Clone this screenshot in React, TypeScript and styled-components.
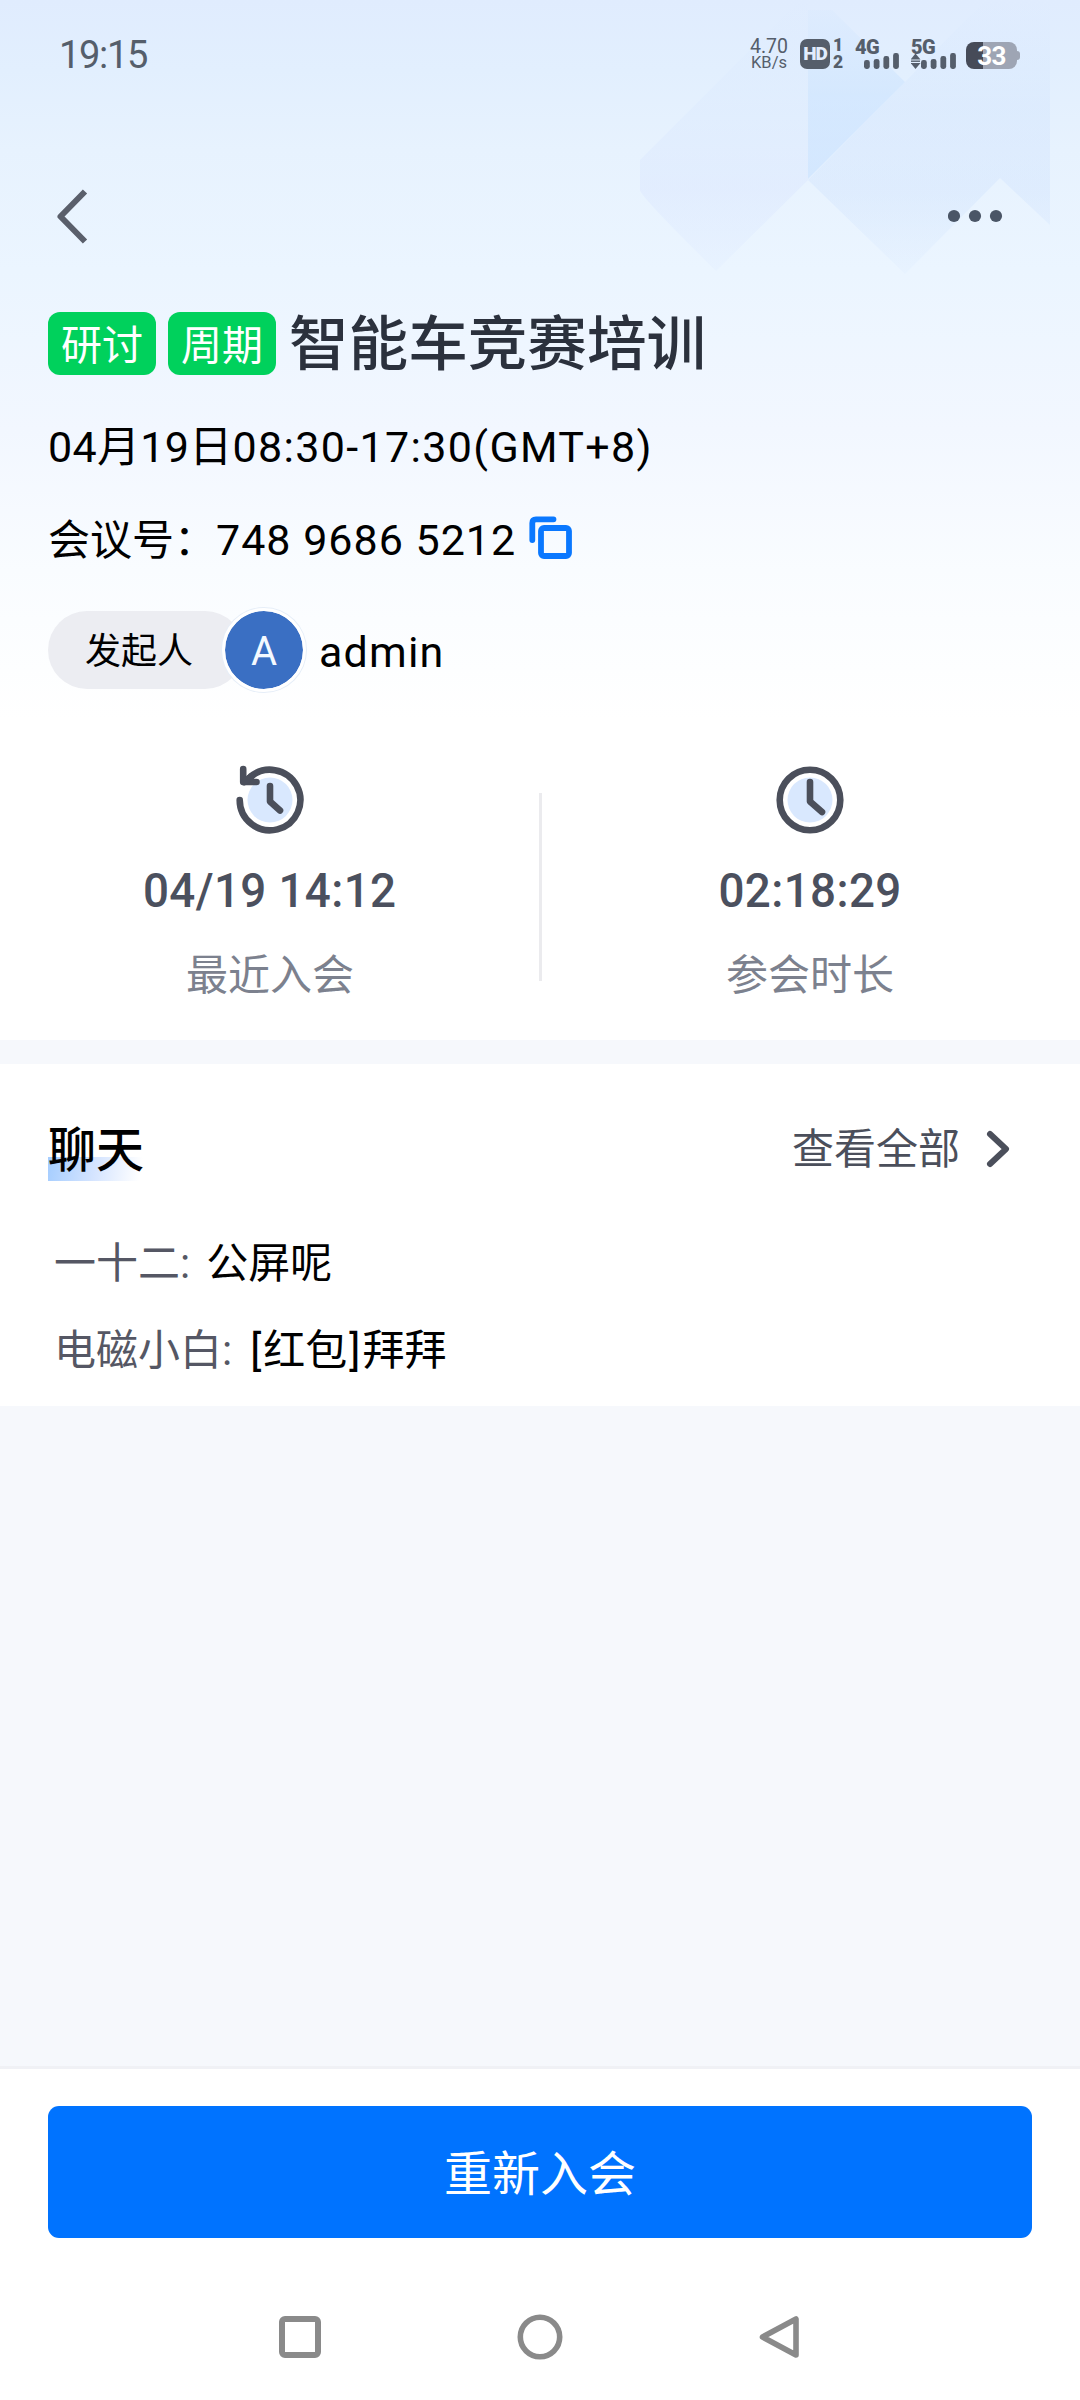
import React from "react";
import styled, { createGlobalStyle } from "styled-components";

const GlobalStyle = createGlobalStyle`
  * { box-sizing: border-box; }
  body {
    margin: 0;
    background: #ffffff;
    font-family: Roboto, "Noto Sans CJK SC", sans-serif;
  }
`;

const Screen = styled.main`
  width: 1080px;
  height: 2400px;
  display: flex;
  flex-direction: column;
  background: #f6f8fc;
  overflow: hidden;
`;

const Hero = styled.section`
  position: relative;
  height: 1040px;
  display: flex;
  flex-direction: column;
  background: linear-gradient(
    180deg,
    #e0ecfe 0px,
    #e2effe 70px,
    #e7f2fe 150px,
    #ebf5ff 270px,
    #f2f7ff 430px,
    #f9fcff 570px,
    #ffffff 720px
  );
`;

const Backdrop = styled.svg`
  position: absolute;
  top: 0;
  right: 0;
`;

const StatusBar = styled.header`
  position: relative;
  height: 108px;
  padding: 0 60px 0 59px;
  display: flex;
  align-items: center;
  justify-content: space-between;
  color: #555e6b;
`;

const Clock = styled.span`
  margin-top: 2px;
  font-size: 38px;
  line-height: 44px;
  letter-spacing: -1.3px;
`;

const StatusIcons = styled.div`
  display: flex;
  align-items: flex-start;
  height: 30px;
`;

const NetSpeed = styled.div`
  width: 42px;
  margin-right: 10px;
  display: flex;
  flex-direction: column;
  align-items: center;
  white-space: nowrap;
`;

const SpeedValue = styled.span`
  font-size: 19.5px;
  line-height: 15px;
`;

const SpeedUnit = styled.span`
  font-size: 16.5px;
  line-height: 18px;
`;

const HdBadge = styled.span`
  width: 30px;
  height: 30px;
  border-radius: 7px;
  background: #555e6b;
  color: #e2edfd;
  display: flex;
  align-items: center;
  justify-content: center;
  font-size: 19px;
  line-height: 30px;
  font-weight: 900;
  letter-spacing: -1px;
`;

const SimNumbers = styled.div`
  width: 12px;
  margin: -2px 11px 0 2px;
  display: flex;
  flex-direction: column;
  align-items: center;
  font-size: 17.5px;
  line-height: 17px;
  font-weight: 900;
`;

const Signal = styled.div<{ $gap: number }>`
  width: 45px;
  height: 30px;
  margin-right: ${(p) => p.$gap}px;
  display: flex;
  flex-direction: column;
`;

const SignalLabel = styled.span`
  height: 14px;
  font-size: 20px;
  line-height: 16px;
  font-weight: 900;
  letter-spacing: -0.7px;
`;

const SignalGlyph = styled.svg`
  display: block;
  flex: none;
`;

const Battery = styled.div`
  width: 51px;
  height: 27px;
  margin-top: 3px;
  border-radius: 8px;
  background: linear-gradient(90deg, #464b58 0 17px, #9ea5b4 17px);
  color: #ffffff;
  display: flex;
  justify-content: center;
  font-size: 26px;
  line-height: 28px;
  font-weight: 700;
  letter-spacing: -0.6px;
`;

const BatteryTip = styled.i`
  width: 3px;
  height: 9px;
  margin-top: 12px;
  border-radius: 0 3px 3px 0;
  background: #9ea5b4;
`;

const NavRow = styled.nav`
  position: relative;
  height: 108px;
  margin-top: 54px;
  padding: 0 76px 0 54px;
  display: flex;
  align-items: center;
  justify-content: space-between;
`;

const TitleRow = styled.div`
  height: 63px;
  margin: 42px 48px 0;
  display: flex;
  align-items: center;
`;

const Tag = styled.span`
  width: 108px;
  height: 63px;
  margin-right: 12px;
  border-radius: 12px;
  background: #00d15c;
  color: #ffffff;
  font-size: 41px;
  line-height: 68px;
  text-align: center;
`;

const Title = styled.h1`
  margin: 3px 0 0 1px;
  color: #2b313d;
  font-size: 59.6px;
  line-height: 60px;
  font-weight: 500;
  white-space: nowrap;
`;

const InfoRow = styled.div<{ $top: number }>`
  height: 60px;
  margin: ${(p) => p.$top}px 48px 0;
  display: flex;
  align-items: center;
  color: #000000;
  font-size: 43px;
  line-height: 60px;
  white-space: pre;
`;

const Spaced = styled.span<{ $ls: number }>`
  letter-spacing: ${(p) => p.$ls}px;
`;

const CjkLabel = styled.span`
  width: 168px;
  padding-top: 2px;
  font-size: 42px;
`;

const CopyIcon = styled.svg`
  margin: 0 0 5px 13px;
`;

const HostRow = styled.div`
  height: 84px;
  margin: 38px 48px 0;
  display: flex;
  align-items: center;
`;

const HostPill = styled.span`
  width: 196px;
  height: 78px;
  margin-right: -22px;
  padding-left: 37px;
  border-radius: 39px;
  background: #ecedf2;
  color: #000000;
  font-size: 36px;
  line-height: 83px;
  white-space: nowrap;
`;

const Avatar = styled.span`
  width: 84px;
  height: 84px;
  border: 3px solid #ffffff;
  border-radius: 50%;
  background: #3a6fc3;
  background-clip: padding-box;
  box-shadow: 0 0 0 1px #e6eef8;
  color: #f4f9ff;
  font-size: 40px;
  line-height: 82px;
  text-align: center;
`;

const HostName = styled.span`
  margin: 3px 0 0 13px;
  font-size: 43px;
  line-height: 60px;
  letter-spacing: 1.2px;
`;

const Stats = styled.div`
  display: grid;
  grid-template-columns: 540px 0 540px;
  justify-items: center;
  margin-top: 72px;
`;

const Stat = styled.div`
  display: flex;
  flex-direction: column;
  align-items: center;
`;

const StatValue = styled.strong`
  margin-top: 25px;
  color: #4b505e;
  font-size: 49px;
  line-height: 60px;
  font-weight: 500;
  letter-spacing: 0.4px;
  transform: scaleX(0.934);
`;

const StatLabel = styled.span`
  margin-top: 25px;
  color: #7c818e;
  font-size: 42px;
  line-height: 60px;
`;

const Divider = styled.i`
  width: 3px;
  height: 188px;
  margin-top: 29px;
  background: #ebebee;
`;

const Chat = styled.section`
  height: 342px;
  margin-top: 24px;
  padding: 0 48px;
  background: #ffffff;
`;

const ChatHead = styled.div`
  height: 124px;
  padding-top: 45px;
  display: flex;
  align-items: center;
  justify-content: space-between;
`;

const ChatTitle = styled.h2`
  width: 96px;
  height: 64px;
  margin: 0;
  padding-top: 3px;
  background: linear-gradient(100deg, #a5cdff 0%, #d6e5ff 50%, #ffffff 95%) 0 100% / 96px 24px no-repeat;
  color: #000000;
  font-size: 48px;
  line-height: 62px;
  font-weight: 500;
  white-space: nowrap;
`;

const ViewAll = styled.a`
  display: flex;
  align-items: center;
  margin-right: 20px;
  padding-top: 3px;
  gap: 24px;
  color: #4b4f5b;
  font-size: 42px;
  line-height: 60px;
`;

const Chevron = styled.svg`
  margin-bottom: 3px;
`;

const Message = styled.p<{ $top: number }>`
  height: 60px;
  margin: ${(p) => p.$top}px 0 0 6px;
  color: #000000;
  font-size: 42px;
  line-height: 60px;
  white-space: pre;
`;

const Sender = styled.span`
  margin-right: 16px;
  color: #555764;
`;

const Bracket = styled.span`
  padding: 0 2px;
`;

const Footer = styled.footer`
  height: 334px;
  margin-top: auto;
  border-top: 3px solid #f0f1f5;
  background: #ffffff;
`;

const Rejoin = styled.button`
  display: block;
  width: 984px;
  height: 132px;
  margin: 37px 48px 0;
  padding: 5px 0 0;
  border: 0;
  border-radius: 11px;
  background: #0073ff;
  color: #ffffff;
  font: 400 48px/127px Roboto, "Noto Sans CJK SC", sans-serif;
`;

const SystemNav = styled.div`
  height: 48px;
  margin-top: 75px;
  padding: 0 276px;
  display: flex;
  align-items: center;
  justify-content: space-between;
`;

const ink = "#555e6b";

function SignalBars({ first, arrows }: { first: number; arrows?: boolean }) {
  const tops = [6, 5, 2, -1];
  return (
    <SignalGlyph width="46" height="16" viewBox="0 -1 46 16" fill={ink}>
      {arrows && (
        <>
          <path d="M4.5-.5 9.5 5.5H-.5Z" />
          <path d="M4.5 15 9.5 9H-.5Z" />
          <path d="M0 6.5h9v1.4H0Z" />
        </>
      )}
      {tops.map((top, i) => (
        <rect key={top} x={first + i * 9.7} y={top} width="5.8" height={15 - top} rx="2.4" />
      ))}
    </SignalGlyph>
  );
}

function HistoryIcon() {
  return (
    <svg width="72" height="72" viewBox="-36 -36 72 72" fill="none" stroke="#4b4f5b" strokeWidth="6.6" strokeLinecap="round" strokeLinejoin="round">
      <circle r="22.5" fill="#d9e8fe" stroke="none" />
      <path d="M-30.3 0A30.3 30.3 0 1 0 -20.5 -22.3" />
      <path d="M-26.8-31V-18H-13.5" />
      <path d="M-26-18-18-24" />
      <path d="M0-14V1.5L10 10.5" />
    </svg>
  );
}

function ClockIcon() {
  return (
    <svg width="72" height="72" viewBox="-36 -36 72 72" fill="none" stroke="#4b4f5b" strokeWidth="6.6" strokeLinecap="round" strokeLinejoin="round">
      <circle r="22.5" fill="#d9e8fe" stroke="none" />
      <circle r="30.3" />
      <path d="M0-18V1.5L12 12" />
    </svg>
  );
}

export default function App() {
  return (
    <>
      <GlobalStyle />
      <Screen>
        <Hero>
          <Backdrop width="460" height="300" viewBox="620 0 460 300">
            <defs>
              <linearGradient id="facet" x1="0" y1="0" x2="0" y2="1">
                <stop offset="0" stopColor="#d2e2fe" stopOpacity="0" />
                <stop offset="0.4" stopColor="#d2e2fe" stopOpacity="0.2" />
                <stop offset="0.7" stopColor="#d6e2ff" stopOpacity="0.35" />
                <stop offset="1" stopColor="#d6e4ff" stopOpacity="0.15" />
              </linearGradient>
              <linearGradient id="facetRight" x1="0" y1="0" x2="0" y2="1">
                <stop offset="0" stopColor="#cfe2fd" stopOpacity="0" />
                <stop offset="0.4" stopColor="#cfe2fd" stopOpacity="0.35" />
                <stop offset="0.7" stopColor="#cfe2fd" stopOpacity="0.4" />
                <stop offset="1" stopColor="#cfe2fd" stopOpacity="0.12" />
              </linearGradient>
              <linearGradient id="facetDark" x1="0" y1="0" x2="0" y2="1">
                <stop offset="0" stopColor="#c6e0ff" stopOpacity="0.1" />
                <stop offset="0.5" stopColor="#c6e0ff" stopOpacity="0.5" />
                <stop offset="1" stopColor="#c6e0ff" stopOpacity="0.6" />
              </linearGradient>
            </defs>
            <path d="M808 0V180L716 271Q640 196 640 190V160L800 0Z" fill="url(#facet)" />
            <path d="M808 10H832L905 82 808 179Z" fill="url(#facetDark)" />
            <path d="M905 82 985 0H1050V225L1000 178 905 274 808 180Z" fill="url(#facetRight)" />
          </Backdrop>
          <StatusBar>
            <Clock>19:15</Clock>
            <StatusIcons>
              <NetSpeed>
                <SpeedValue>4.70</SpeedValue>
                <SpeedUnit>KB/s</SpeedUnit>
              </NetSpeed>
              <HdBadge>HD</HdBadge>
              <SimNumbers>
                <span>1</span>
                <span>2</span>
              </SimNumbers>
              <Signal $gap={11}>
                <SignalLabel>4G</SignalLabel>
                <SignalBars first={9} />
              </Signal>
              <Signal $gap={10}>
                <SignalLabel>5G</SignalLabel>
                <SignalBars first={10} arrows />
              </Signal>
              <Battery>33</Battery>
              <BatteryTip />
            </StatusIcons>
          </StatusBar>
          <NavRow>
            <svg width="36" height="60" viewBox="0 0 36 60" fill="none" stroke="#5a5f6b" strokeWidth="6">
              <path d="M31 5.5 6.5 30.5 31 55.5" strokeLinejoin="round" />
            </svg>
            <svg width="56" height="14" viewBox="0 0 56 14" fill="#4a5566">
              <circle cx="6" cy="7" r="6.1" />
              <circle cx="27" cy="7" r="6.1" />
              <circle cx="48" cy="7" r="6.1" />
            </svg>
          </NavRow>
          <TitleRow>
            <Tag>研讨</Tag>
            <Tag>周期</Tag>
            <Title>智能车竞赛培训</Title>
          </TitleRow>
          <InfoRow $top={42}>
            <Spaced $ls={0.3}>04月19日</Spaced>
            <Spaced $ls={1.35}>08:30-17:30(GMT+8)</Spaced>
          </InfoRow>
          <InfoRow $top={33}>
            <CjkLabel>会议号：</CjkLabel>
            <Spaced $ls={1}>748 9686 5212</Spaced>
            <CopyIcon width="43" height="43" viewBox="0 0 43 43" fill="none" stroke="#0a78ff" strokeWidth="5.8" strokeLinecap="round">
              <path d="M3.3 24V7Q3.3 3.3 7 3.3H24.5" />
              <rect x="12" y="12" width="28" height="28" rx="3" />
            </CopyIcon>
          </InfoRow>
          <HostRow>
            <HostPill>发起人</HostPill>
            <Avatar>A</Avatar>
            <HostName>admin</HostName>
          </HostRow>
          <Stats>
            <Stat>
              <HistoryIcon />
              <StatValue>04/19 14:12</StatValue>
              <StatLabel>最近入会</StatLabel>
            </Stat>
            <Divider />
            <Stat>
              <ClockIcon />
              <StatValue>02:18:29</StatValue>
              <StatLabel>参会时长</StatLabel>
            </Stat>
          </Stats>
        </Hero>
        <Chat>
          <ChatHead>
            <ChatTitle>聊天</ChatTitle>
            <ViewAll>
              查看全部
              <Chevron width="28" height="44" viewBox="0 0 28 44" fill="none" stroke="#4b4f5b" strokeWidth="6" strokeLinecap="round" strokeLinejoin="round">
                <path d="M6 7 22 22 6 37" />
              </Chevron>
            </ViewAll>
          </ChatHead>
          <Message $top={46}>
            <Sender>一十二:</Sender>公屏呢
          </Message>
          <Message $top={27}>
            <Sender>电磁小白:</Sender>
            <Bracket>[</Bracket>红包<Bracket>]</Bracket>拜拜
          </Message>
        </Chat>
        <Footer>
          <Rejoin>重新入会</Rejoin>
          <SystemNav>
            <svg width="48" height="48" viewBox="0 0 48 48" fill="none" stroke="#8a8a8a" strokeWidth="6">
              <rect x="6" y="6" width="36" height="36" rx="3" />
            </svg>
            <svg width="48" height="48" viewBox="0 0 48 48" fill="none" stroke="#8a8a8a" strokeWidth="5.6">
              <circle cx="24" cy="24" r="19.7" />
            </svg>
            <svg width="48" height="48" viewBox="0 0 48 48" fill="none" stroke="#8a8a8a" strokeWidth="5.6" strokeLinejoin="round">
              <path d="M40 6V42L6.5 24Z" />
            </svg>
          </SystemNav>
        </Footer>
      </Screen>
    </>
  );
}
